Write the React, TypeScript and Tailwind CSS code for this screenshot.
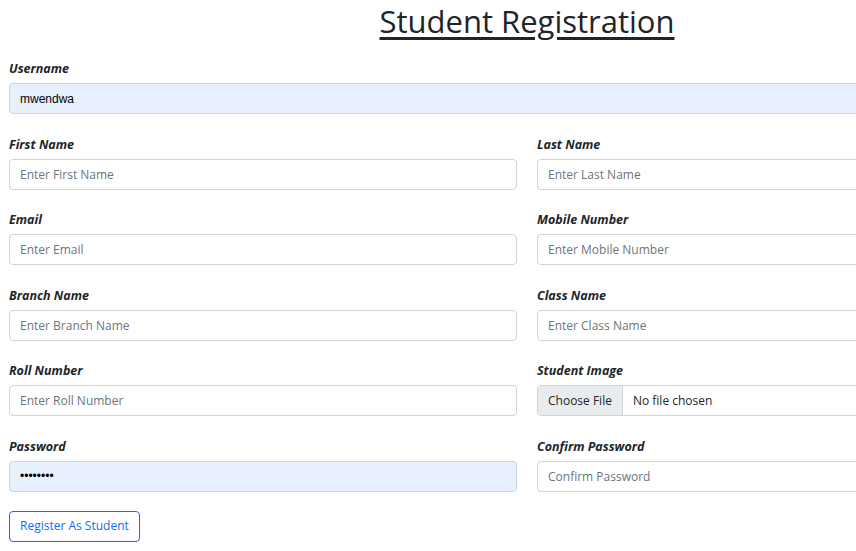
import React from 'react';

const font = { fontFamily: '"Open Sans", "Noto Sans", sans-serif' };

interface FieldProps {
  label: string;
  placeholder?: string;
  value?: string;
  filled?: boolean;
  password?: boolean;
}

const Field: React.FC<FieldProps> = ({ label, placeholder, value, filled, password }) => (
  <div className="flex flex-col">
    <label className="h-[21px] text-[12.5px] leading-[21px] font-bold italic text-[#212529] mb-[4px]">
      {label}
    </label>
    <input
      type={password ? 'password' : 'text'}
      readOnly
      defaultValue={value}
      placeholder={placeholder}
      className={`h-[31px] w-full rounded-[4px] border border-[#ced4da] px-[10px] text-[12px] text-[#212529] outline-none placeholder:text-[#6c757d] ${
        filled ? 'bg-[#e8f0fe] font-["Liberation_Sans"] text-[11px] text-black' : 'bg-white'
      }`}
    />
  </div>
);

const FileField: React.FC<{ label: string }> = ({ label }) => (
  <div className="flex flex-col">
    <label className="h-[21px] text-[12.5px] leading-[21px] font-bold italic text-[#212529] mb-[4px]">
      {label}
    </label>
    <div className="flex h-[31px] w-full items-center overflow-hidden rounded-[4px] border border-[#ced4da] bg-white text-[12px] text-[#212529]">
      <div className="flex h-full items-center border-r border-[#ced4da] bg-[#e9ecef] px-[10px]">Choose File</div>
      <div className="px-[10px]">No file chosen</div>
    </div>
  </div>
);

export default function App() {
  return (
    <div className="h-[551px] w-[856px] overflow-hidden bg-white" style={font}>
      <div className="ml-[9px] w-[1036px]">
        <h1 className="pt-[1px] text-center text-[31px] font-medium leading-[40px] text-[#212529] underline decoration-[3px] underline-offset-[4px]">
          Student Registration
        </h1>

        <div className="mt-[17px]">
          <Field label="Username" value="mwendwa" filled />
        </div>

        <div className="mt-[19.5px] grid grid-cols-2 gap-x-[20px] gap-y-[19.5px]">
          <Field label="First Name" placeholder="Enter First Name" />
          <Field label="Last Name" placeholder="Enter Last Name" />
          <Field label="Email" placeholder="Enter Email" />
          <Field label="Mobile Number" placeholder="Enter Mobile Number" />
          <Field label="Branch Name" placeholder="Enter Branch Name" />
          <Field label="Class Name" placeholder="Enter Class Name" />
          <Field label="Roll Number" placeholder="Enter Roll Number" />
          <FileField label="Student Image" />
          <Field label="Password" value="password" filled password />
          <Field label="Confirm Password" placeholder="Confirm Password" />
        </div>

        <button className="mt-[19px] h-[31px] rounded-[4px] border border-[#0d6efd] px-[10px] text-[12px] text-[#0d6efd]">
          Register As Student
        </button>
      </div>
    </div>
  );
}
